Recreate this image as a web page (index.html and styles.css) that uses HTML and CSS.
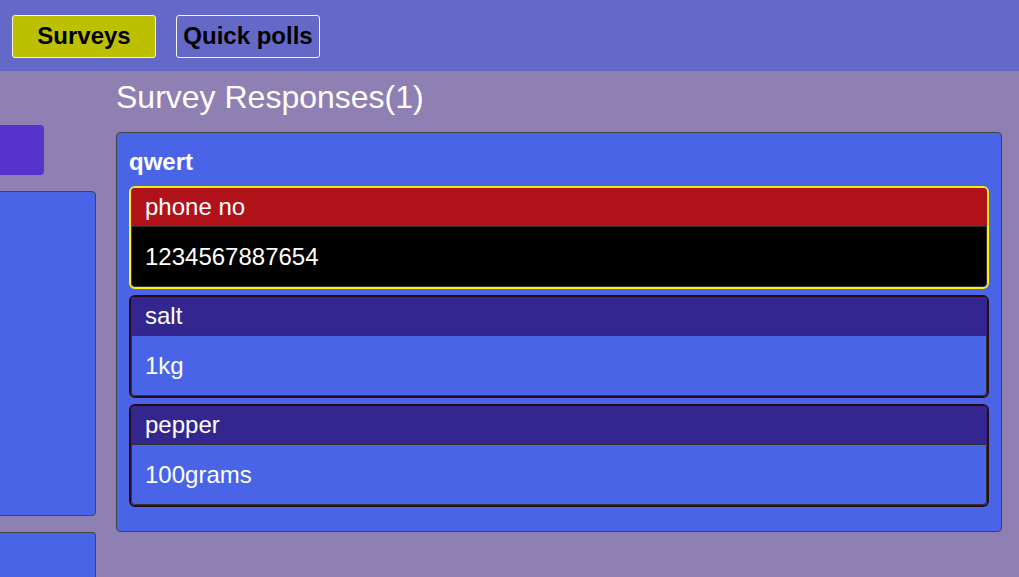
FILE: index.html
```html
<!DOCTYPE html>
<html lang="en">
<head>
<meta charset="utf-8">
<title>Survey Responses</title>
<link rel="stylesheet" href="styles.css">
</head>
<body>
<header class="nav">
  <a class="nav-btn active">Surveys</a>
  <a class="nav-btn">Quick polls</a>
</header>
<div class="main">
  <aside class="side">
    <div class="side-btn"></div>
    <div class="side-panel tall"></div>
    <div class="side-panel short"></div>
  </aside>
  <section class="content">
    <h1 class="title">Survey Responses(1)</h1>
    <div class="panel">
      <div class="panel-title">qwert</div>
      <div class="item highlight">
        <div class="item-head">phone no</div>
        <div class="item-body">1234567887654</div>
      </div>
      <div class="item">
        <div class="item-head">salt</div>
        <div class="item-body">1kg</div>
      </div>
      <div class="item">
        <div class="item-head">pepper</div>
        <div class="item-body">100grams</div>
      </div>
    </div>
  </section>
</div>
</body>
</html>
```
FILE: styles.css
```css
html, body {
  margin: 0;
  padding: 0;
}
body {
  font-family: "Liberation Sans", Helvetica, Arial, sans-serif;
  background: #8E80B2;
  height: 577px;
  overflow: hidden;
}
.nav {
  height: 71px;
  box-sizing: border-box;
  background: #6469C8;
  display: flex;
  align-items: flex-start;
  gap: 20px;
  padding: 15px 12px 0;
}
.nav-btn {
  width: 144px;
  height: 43px;
  box-sizing: border-box;
  border: 1px solid #f4f4f4;
  border-radius: 3px;
  display: flex;
  align-items: center;
  justify-content: center;
  padding-bottom: 2px;
  font-size: 24px;
  font-weight: bold;
  color: #000;
}
.nav-btn.active {
  background: #BDC000;
}
.main {
  display: flex;
  gap: 20px;
}
.side {
  width: 96px;
  flex: none;
  padding-top: 54px;
}
.side-btn {
  margin-left: -10px;
  width: 54px;
  height: 50px;
  background: #5533CC;
  border-radius: 4px;
}
.side-panel {
  margin-left: -10px;
  box-sizing: border-box;
  background: #4A64E8;
  border: 1px solid #444;
  border-radius: 4px;
}
.side-panel.tall {
  margin-top: 16px;
  height: 325px;
}
.side-panel.short {
  margin-top: 16px;
  height: 45px;
  border-bottom: none;
  border-radius: 4px 4px 0 0;
}
.content {
  flex: 1;
  margin-right: 17px;
}
.title {
  margin: 8px 0 17px;
  font-size: 32px;
  font-weight: normal;
  line-height: 36px;
  color: #fff;
}
.panel {
  background: #4A64E8;
  border: 1px solid #444;
  border-radius: 4px;
  padding: 15px 12px 24px;
}
.panel-title {
  font-size: 24px;
  font-weight: bold;
  line-height: 28px;
  color: #fff;
  margin-bottom: 10px;
}
.item {
  border: 2px solid #2A0A14;
  border-radius: 6px;
  overflow: hidden;
  margin-bottom: 6px;
  font-size: 24px;
  line-height: 30px;
  color: #fff;
}
.item:last-child {
  margin-bottom: 0;
}
.item-head {
  background: #33268F;
  padding: 4px 14px;
}
.item-body {
  background: #4A64E8;
  border: 1px solid #333;
  border-radius: 0 0 4px 4px;
  padding: 15px 13px 14px;
}
.item.highlight {
  border-color: #FFF000;
}
.item.highlight .item-head {
  background: #B11219;
}
.item.highlight .item-body {
  background: #000;
}
```
